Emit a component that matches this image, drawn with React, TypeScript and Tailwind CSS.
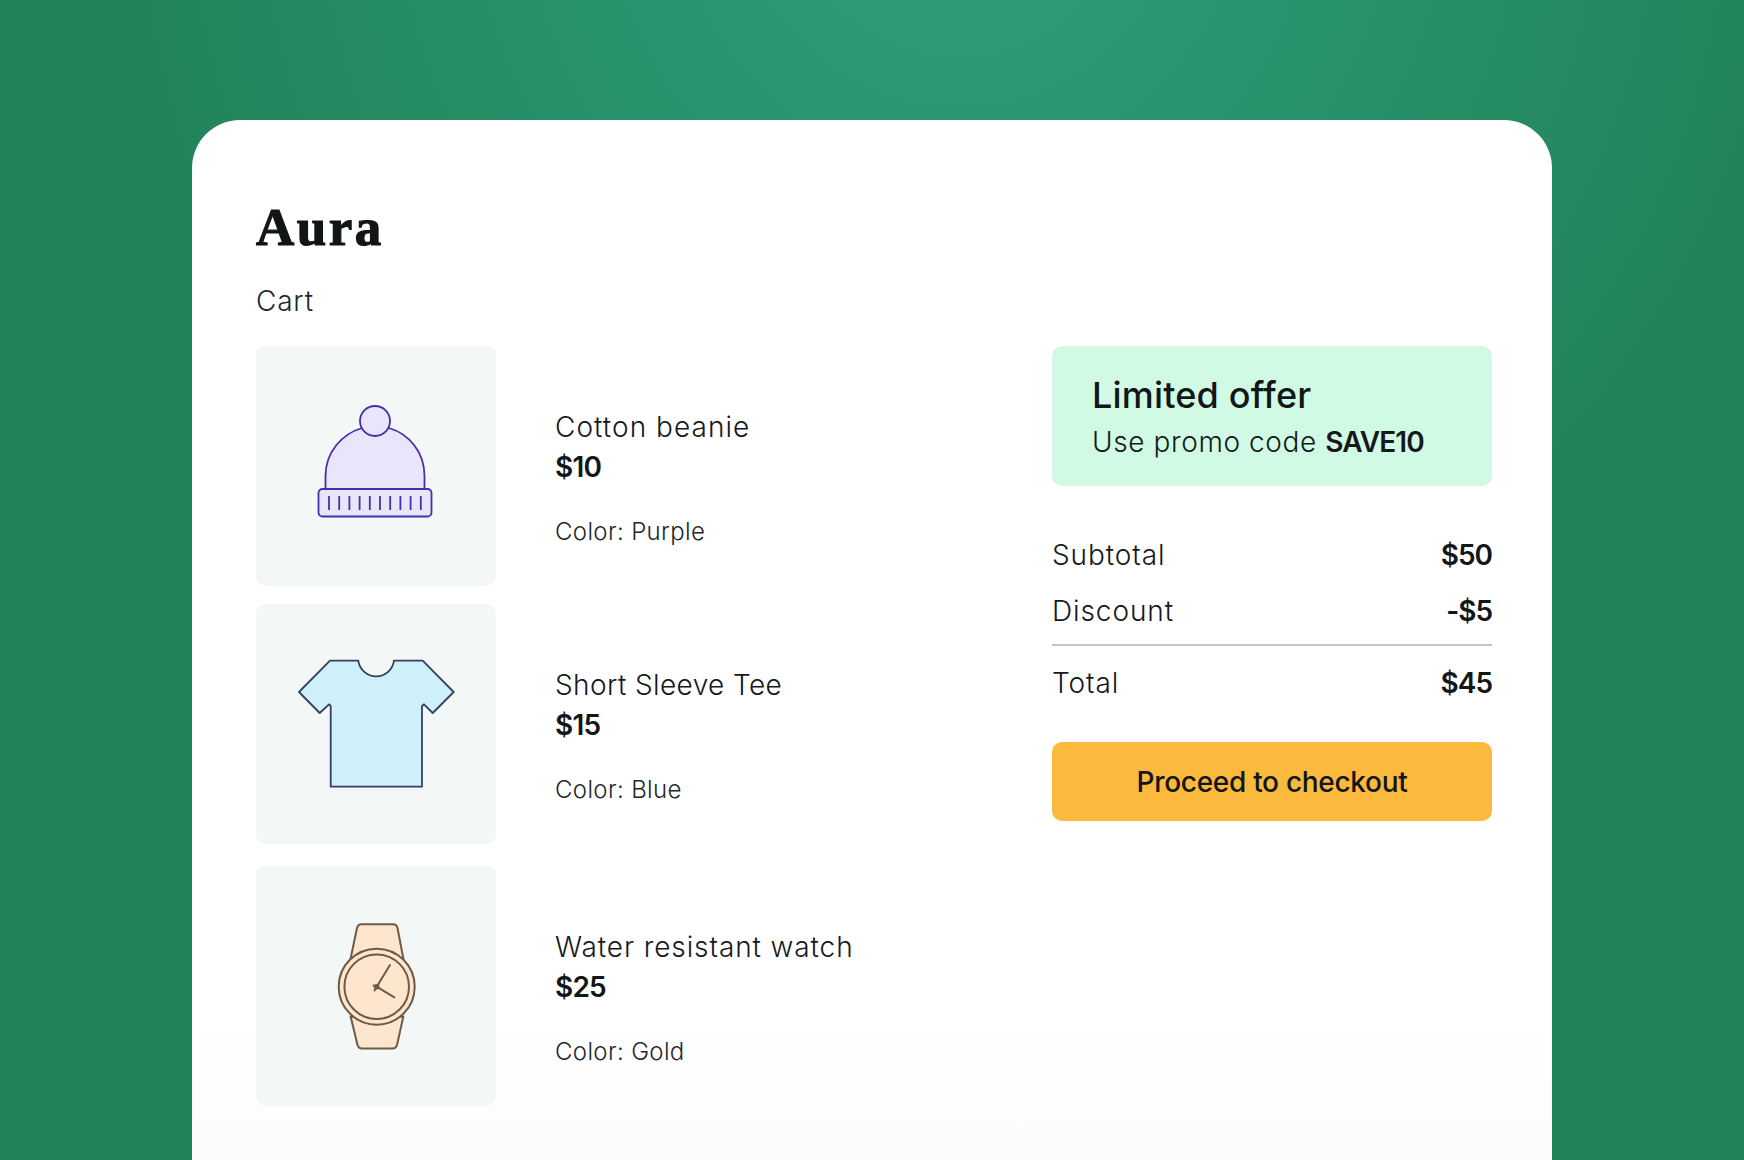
import { ReactNode } from 'react';

const FONT = "font-['Inter','Liberation_Sans',sans-serif]";

function BeanieIcon() {
  const ribs = [73, 83.2, 93.4, 103.6, 113.8, 124, 134.2, 144.4, 154.6, 164.8];
  return (
    <svg viewBox="0 0 240 240" className="h-[240px] w-[240px]" fill="#e9e5fb" stroke="#4330ab" strokeWidth="1.8">
      <path d="M69.5 143 V130 C69.5 106 86 88 106 82 L133 82 C153 88 168.5 106 168.5 130 V143 Z" />
      <circle cx="119" cy="75" r="15" />
      <rect x="62.5" y="143" width="113" height="27.5" rx="4" />
      {ribs.map((x) => (
        <line key={x} x1={x} x2={x} y1="150" y2="164" />
      ))}
    </svg>
  );
}

function TeeIcon() {
  return (
    <svg viewBox="0 0 240 240" className="h-[240px] w-[240px]" fill="#cdf0f9" stroke="#363f63" strokeWidth="1.8" strokeLinejoin="round">
      <path d="M74 56.7 H102.3 A18 18 0 0 0 138 56.7 H166.7 L197.7 88 L176.7 109 L168 100.3 L166 102 V182.7 H74.7 V102 L73 100.3 L63.7 109 L43 88 Z" />
    </svg>
  );
}

function WatchIcon() {
  return (
    <svg viewBox="0 0 240 240" className="h-[240px] w-[240px]" fill="#fde6cd" stroke="#6e5a48" strokeWidth="2" strokeLinecap="round">
      <path d="M94.7 92.3 L101 62 Q102 58.3 105.5 58.3 H137 Q140.5 58.3 141.5 62 L147.3 92.3 Z" />
      <path d="M94.7 150.7 L101.5 179 Q102.5 182.5 106 182.5 H136.5 Q140 182.5 141 179 L147.3 150.7 Z" />
      <circle cx="120.7" cy="120.7" r="38" />
      <circle cx="120.7" cy="120.7" r="32.3" />
      <path d="M134 99 L120.7 120.7 L138.3 131.3 M117.5 119.5 L120.7 120.7 L118.5 124.5" fill="none" />
      <circle cx="120.7" cy="120.7" r="1.8" fill="#6e5a48" />
    </svg>
  );
}

interface CartItem {
  name: string;
  price: string;
  color: string;
  icon: ReactNode;
  spacing: string;
  tracking: string;
}

const ITEMS: CartItem[] = [
  { name: 'Cotton beanie', price: '$10', color: 'Purple', icon: <BeanieIcon />, spacing: '', tracking: 'tracking-[1.05px]' },
  { name: 'Short Sleeve Tee', price: '$15', color: 'Blue', icon: <TeeIcon />, spacing: 'mt-[18px]', tracking: 'tracking-[0.4px]' },
  { name: 'Water resistant watch', price: '$25', color: 'Gold', icon: <WatchIcon />, spacing: 'mt-[22px]', tracking: 'tracking-[0.9px]' },
];

function CartRow({ item }: { item: CartItem }) {
  return (
    <div className={`flex ${item.spacing}`}>
      <div className="h-[240px] w-[240px] shrink-0 rounded-[10px] bg-[#f3f7f6]">{item.icon}</div>
      <div className="ml-[59px] pt-[61px]">
        <div className={`text-[28px] leading-[40px] font-light text-[#16191c] ${item.tracking}`}>{item.name}</div>
        <div className="text-[28px] leading-[40px] font-semibold tracking-[-0.8px] text-[#121616]">{item.price}</div>
        <div className="mt-[27px] text-[24px] leading-[36px] font-light tracking-[0.35px] text-[#22272b]">Color: {item.color}</div>
      </div>
    </div>
  );
}

function SummaryRow({ label, value, className }: { label: string; value: string; className?: string }) {
  return (
    <div className={`flex items-center justify-between text-[28px] leading-[40px] ${className ?? ''}`}>
      <span className="font-light tracking-[0.9px] text-[#16191c]">{label}</span>
      <span className="font-semibold tracking-[-1px] text-[#121616]">{value}</span>
    </div>
  );
}

export default function App() {
  return (
    <div className={`flex h-[1160px] justify-center overflow-hidden bg-[radial-gradient(ellipse_900px_900px_at_55%_-10%,#2fa07c,#218157)] pt-[120px] ${FONT}`}>
      <div className="h-[1040px] w-[1360px] rounded-t-[48px] bg-[linear-gradient(to_bottom,#ffffff_85%,#fcfcfc)] pt-[82px] pr-[60px] pl-[64px]">
        {/* Brand + title */}
        <div className="font-['Liberation_Serif',serif] text-[53px] leading-[50px] font-bold tracking-[2.5px] text-[#111614] [-webkit-text-stroke:1.2px_#111614]">Aura</div>
        <div className="mt-[29px] text-[28px] leading-[40px] font-light tracking-[0.8px] text-[#22272b]">Cart</div>

        <div className="mt-[25px] flex justify-between">
          <div>
            {ITEMS.map((item) => (
              <CartRow key={item.name} item={item} />
            ))}
          </div>

          <div className="w-[440px]">
            <div className="h-[140px] rounded-[10px] bg-[#d1fae5] pt-[29px] pl-[40px]">
              <div className="text-[36px] leading-[40px] font-medium tracking-[0.17px] text-[#121616]">Limited offer</div>
              <div className="mt-[7px] text-[28px] leading-[40px] font-light tracking-[0.6px] text-[#16191c]">
                Use promo code <span className="font-semibold tracking-[-0.9px]">SAVE10</span>
              </div>
            </div>

            <SummaryRow label="Subtotal" value="$50" className="mt-[49px]" />
            <SummaryRow label="Discount" value="-$5" className="mt-[16px]" />
            <div className="mt-[13px] h-[2px] bg-[#c1c6c6]" />
            <SummaryRow label="Total" value="$45" className="mt-[17px]" />

            <button className="mt-[39px] h-[79px] w-full rounded-[10px] bg-[#fbb93e] text-[28px] font-medium tracking-[-0.3px] text-[#121616]">
              Proceed to checkout
            </button>
          </div>
        </div>
      </div>
    </div>
  );
}
